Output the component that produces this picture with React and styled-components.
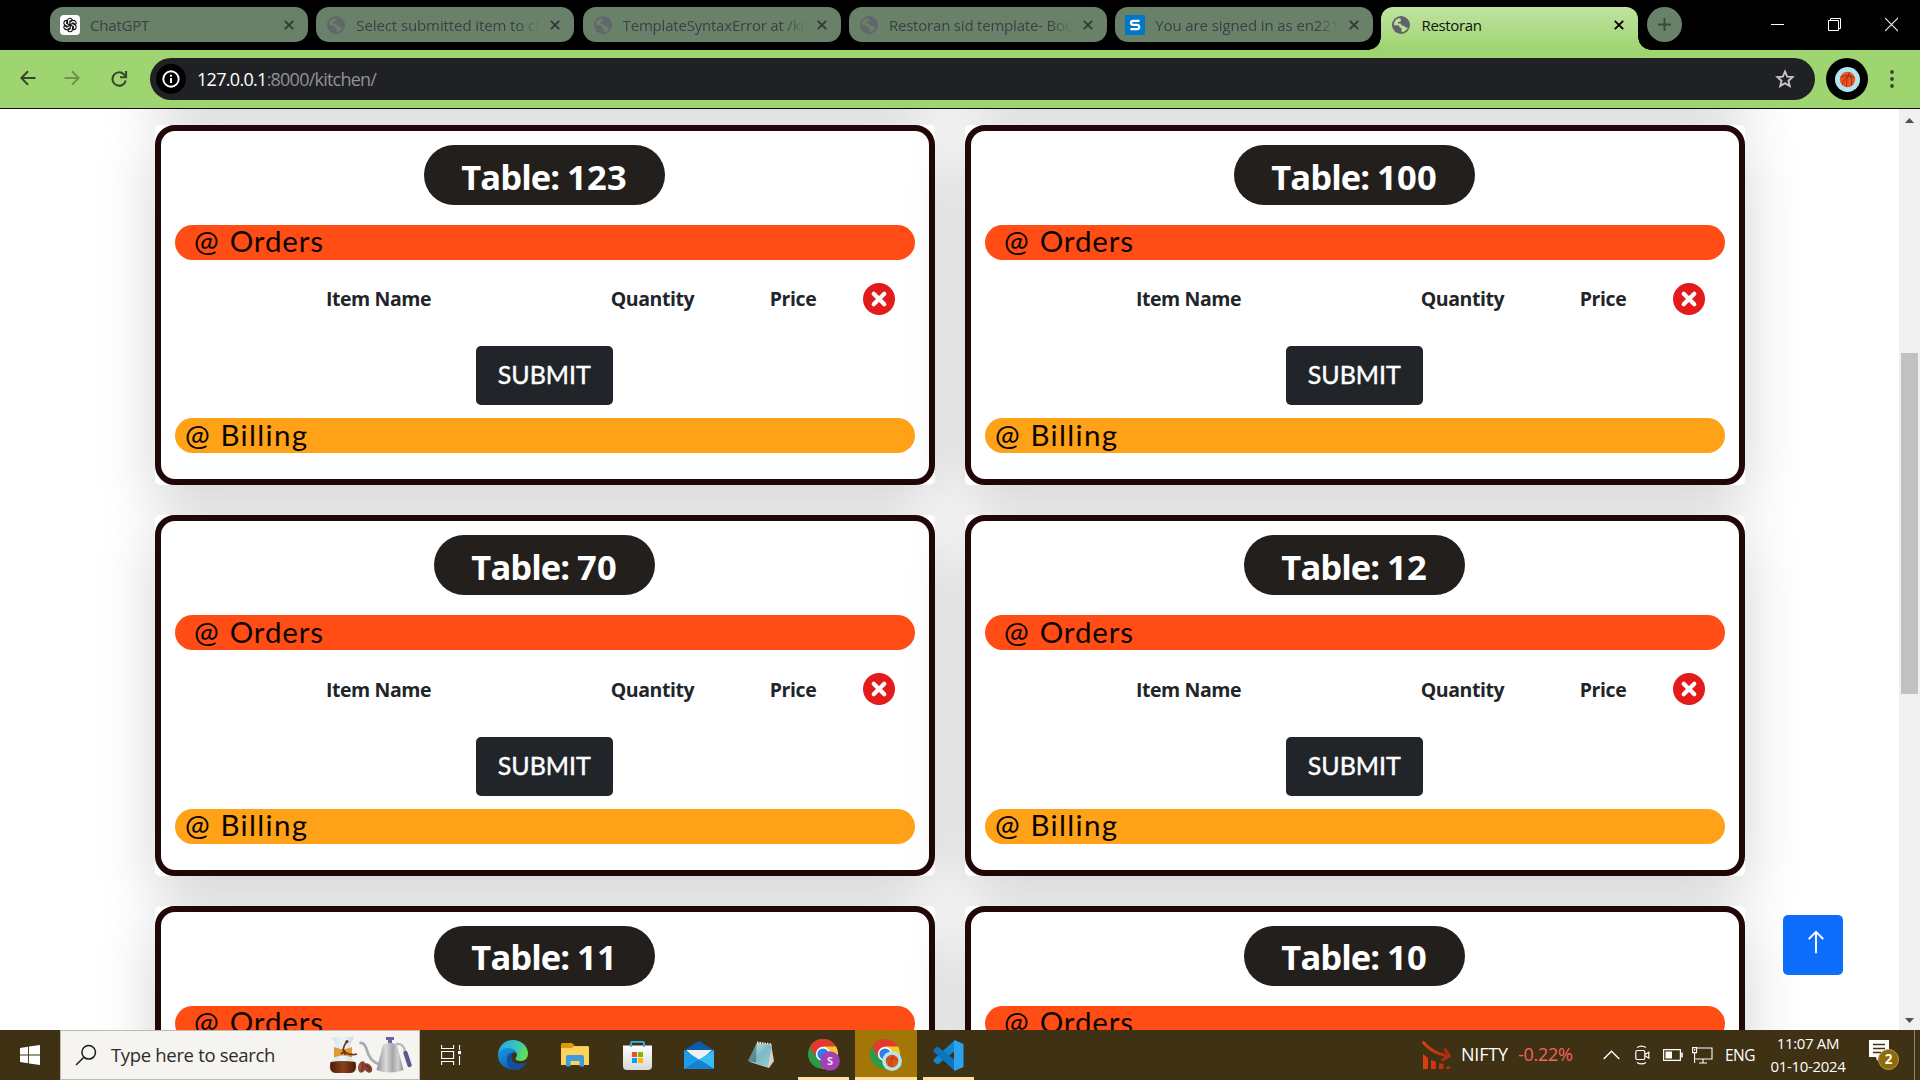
import React from "react";
import styled, { createGlobalStyle } from "styled-components";

const segoe = '"Open Sans", "Noto Sans", sans-serif';
const nunito = '"Lato", "Open Sans", sans-serif';

const GlobalStyle = createGlobalStyle`
  * { box-sizing: border-box; }
  body { margin: 0; background: #fff; overflow: hidden; font-family: ${segoe}; }
  svg { display: block; flex: none; }
`;

const Screen = styled.div`
  width: 1920px;
  height: 1080px;
  display: flex;
  flex-direction: column;
  overflow: hidden;
`;

const Label = styled.span`
  font-family: ${(p) => p.$font || segoe};
  font-size: ${(p) => p.$size}px;
  font-weight: ${(p) => p.$weight || 400};
  letter-spacing: ${(p) => p.$spacing || 0}px;
  word-spacing: ${(p) => p.$words || 0}px;
  line-height: ${(p) => p.$line || 1.3};
  color: ${(p) => p.$color || "#fff"};
  -webkit-text-stroke: ${(p) => p.$stroke || 0}px currentColor;
  white-space: pre;
`;

/* ---------- browser chrome ---------- */

const TabStrip = styled.div`
  height: 50px;
  flex: none;
  background: #000;
  display: flex;
  padding: 7px 0 0 50px;
  gap: 8.3px;
`;

const Tab = styled.div`
  width: 258px;
  height: 35px;
  flex: none;
  border-radius: 13px;
  background: #6a8169;
  display: flex;
  align-items: center;
  padding: 0 14px 0 10px;
`;

const ActiveTab = styled(Tab)`
  position: relative;
  width: 257px;
  height: 43px;
  padding-bottom: 8px;
  border-radius: 12px 12px 0 0;
  background: linear-gradient(#c0e3a0, #9fd571);
  &::before,
  &::after {
    content: "";
    position: absolute;
    bottom: 0;
    width: 13px;
    height: 13px;
  }
  &::before {
    left: -13px;
    background: radial-gradient(circle at 0 0, transparent 12.5px, #9fd571 13px);
  }
  &::after {
    right: -13px;
    background: radial-gradient(circle at 100% 0, transparent 12.5px, #9fd571 13px);
  }
`;

const Favicon = styled.div`
  width: 20px;
  height: 20px;
  flex: none;
  display: flex;
  align-items: center;
  justify-content: center;
  border-radius: ${(p) => p.$radius || 0}px;
  background: ${(p) => p.$bg || "transparent"};
  margin-right: 10px;
`;

const TabTitle = styled.div`
  flex: 1;
  min-width: 0;
  overflow: hidden;
  display: flex;
  mask-image: ${(p) => (p.$fade ? "linear-gradient(90deg, #000 87%, transparent 99%)" : "none")};
  margin-right: 8px;
  padding-top: 2px;
`;

const NewTab = styled.div`
  width: 35px;
  height: 35px;
  border-radius: 50%;
  background: #6a8169;
  display: flex;
  align-items: center;
  justify-content: center;
`;

const WindowControls = styled.div`
  display: flex;
  gap: 44px;
  margin: 10px 22px 0 auto;
`;

const Toolbar = styled.div`
  height: 59px;
  flex: none;
  background: #9fd571;
  border-bottom: 1px solid #111;
  display: flex;
  align-items: center;
  padding: 0 26px 0 18px;
`;

const NavIcons = styled.div`
  display: flex;
  gap: 27.5px;
  width: 132px;
`;

const Omnibox = styled.div`
  width: 1665px;
  height: 42px;
  border-radius: 21px;
  background: #202124;
  display: flex;
  align-items: center;
  padding: 0 20px 0 6px;
`;

const InfoBadge = styled.div`
  width: 30px;
  height: 30px;
  border-radius: 50%;
  background: #000;
  display: flex;
  align-items: center;
  justify-content: center;
  margin-right: 11px;
`;

const Url = styled.div`
  flex: 1;
  display: flex;
  padding-top: 2px;
`;

const Avatar = styled.div`
  width: 42px;
  height: 42px;
  margin-left: 11px;
  border-radius: 50%;
  background: #000;
  display: flex;
  align-items: center;
  justify-content: center;
`;

const Spacer = styled.div`
  flex: 1;
`;

/* ---------- page ---------- */

const PageRow = styled.div`
  height: 921px;
  flex: none;
  display: flex;
`;

const Viewport = styled.main`
  position: relative;
  width: 1899px;
  height: 921px;
  overflow: hidden;
  background: #fff;
`;

const TableGrid = styled.section`
  display: grid;
  grid-template-columns: 780px 780px;
  gap: 30px;
  margin: -374.4px 0 0 155px;
`;

const CardShell = styled.article`
  height: 360.4px;
  border-radius: 5px;
  background: #fff;
  box-shadow: 0 20px 60px rgba(0, 0, 0, 0.175);
`;

const CardBody = styled.div`
  height: 100%;
  border: 6px solid #210708;
  border-radius: 20px;
  padding: 14px;
  display: flex;
  flex-direction: column;
  align-items: center;
`;

const TablePill = styled.h2`
  margin: 0 1.500px 20px 0;
  height: 60px;
  width: ${(p) => p.$width}px;
  border-radius: 30px;
  background: #231f1c;
  display: flex;
  align-items: center;
  justify-content: center;
  gap: 8px;
  padding-top: 4px;
`;

const SectionBar = styled.div`
  align-self: stretch;
  height: 35px;
  border-radius: 17.5px;
  background: ${(p) => p.$bg};
  padding: 0 0 2px ${(p) => p.$indent}px;
  display: flex;
  align-items: center;
`;

const HeaderRow = styled.div`
  align-self: stretch;
  height: 78.2px;
  display: grid;
  grid-template-columns: 407px 141px 140px 32px;
  align-items: center;
  justify-items: center;
`;

const Submit = styled.button`
  width: 137px;
  height: 59px;
  margin: 8px 1.500px 13px 0;
  border: 0;
  padding: 0 0 2px;
  border-radius: 5px;
  background: #212529;
  display: flex;
  align-items: center;
  justify-content: center;
`;

const BackToTop = styled.button`
  position: absolute;
  right: 56px;
  bottom: 55px;
  width: 60px;
  height: 60px;
  border: 0;
  border-radius: 5px;
  background: #0d6efd;
  display: flex;
  align-items: center;
  justify-content: center;
  padding: 0 0 6px 6px;
`;

const Scrollbar = styled.div`
  width: 21px;
  background: #f0f0f0;
  display: flex;
  flex-direction: column;
  align-items: center;
  padding: 9px 0 7px;
`;

const Thumb = styled.div`
  width: 17px;
  height: 341px;
  margin-top: 230px;
  background: #c1c1c1;
`;

/* ---------- taskbar ---------- */

const Taskbar = styled.footer`
  height: 50px;
  flex: none;
  display: flex;
  background: #3f3113;
`;

const StartButton = styled.div`
  width: 60px;
  display: flex;
  align-items: center;
  justify-content: center;
`;

const SearchBox = styled.div`
  width: 360px;
  background: #f6f4f1;
  border: 1px solid #bdbab4;
  display: flex;
  align-items: center;
  gap: 14px;
  padding: 0 7px 0 14px;
`;

const AppSlot = styled.div`
  width: ${(p) => p.$width || 62}px;
  height: 50px;
  display: flex;
  align-items: center;
  justify-content: center;
  background: ${(p) => (p.$active ? "#a27708" : "transparent")};
  box-shadow: ${(p) => (p.$active ? "inset 0 -3px 0 #fde0a4" : "none")};
`;

const RunningApp = styled(AppSlot)`
  width: 51px;
  margin: 0 5.5px 0 6px;
  box-shadow: inset 0 -3px 0 #fde0a4;
`;

const Tray = styled.div`
  margin-left: auto;
  display: flex;
  align-items: center;
  padding-right: 5px;
`;

const TraySlot = styled.div`
  width: ${(p) => p.$width}px;
  display: flex;
`;

const Clock = styled.div`
  width: 92px;
  display: flex;
  flex-direction: column;
  align-items: center;
  margin-right: 15px;
`;

const Divider = styled.div`
  width: 1px;
  height: 50px;
  background: #8b8473;
`;

/* ---------- icons ---------- */

const Globe = () => (
  <svg width="18" height="18" viewBox="0 0 18 18">
    <circle cx="9" cy="9" r="9" fill="#5f6368" />
    <path d="M8.200 2C4.300 2.200 1.800 5.500 2 9.300c1.600.2 3.400-.3 4.800.5.9.6.6 1.500 1.500 1.900 1 .4 1.200.6 1.200 1.700l.1 2.500c3 0 5.300-2 6.200-4.500-.9.400-2.300.3-2.900-.7-.7-1-1.900-.8-2.900-1.100-.9-.4-.6-1.800-1.800-2-1-.1-2 .2-2.300-.6-.2-.9.700-1.300 1.700-1.300.900 0 1.400-.4 1.300-1.200 0-.8-.4-1.500-.7-2.500z" fill="currentColor" />
  </svg>
);

const GlobeTint = styled.div`
  display: flex;
  opacity: ${(p) => (p.$dim ? 0.85 : 1)};
  color: ${(p) => (p.$dim ? "#6a8169" : "#b9df98")};
`;

const OpenAi = () => (
  <svg width="16" height="16" viewBox="0 0 16 16" fill="none" stroke="#111" strokeWidth="1.1">
    {[0, 60, 120, 180, 240, 300].map((a) => (
      <path key={a} d="M5.500 6.500V3.600a2.500 2.500 0 0 1 4.800-.8L7.800 4.300v4" transform={`rotate(${a} 8 8)`} />
    ))}
  </svg>
);

const SIcon = () => (
  <svg width="20" height="20" viewBox="0 0 20 20">
    <rect width="20" height="20" fill="#0078c8" />
    <path d="M14.600 5.800H8.200Q6 5.800 6 7.800T8.200 9.900h3.600q2.400 0 2.400 2.200T11.800 14.200H5.400" fill="none" stroke="#fff" strokeWidth="2.300" />
  </svg>
);

const Cross = ({ color }) => (
  <svg width="10" height="10" viewBox="0 0 10 10" stroke={color} strokeWidth="1.800">
    <path d="M.8.8l8.400 8.400M9.200.8L.8 9.200" />
  </svg>
);

const Plus = () => (
  <svg width="13" height="13" viewBox="0 0 13 13" stroke="#3b4a3a" strokeWidth="1.900">
    <path d="M6.500 0v13M0 6.500h13" />
  </svg>
);

const Back = ({ flip, color }) => (
  <svg width="18" height="18" viewBox="0 0 18 18" fill="none" stroke={color} strokeWidth="2" transform={flip ? "scale(-1 1)" : undefined}>
    <path d="M17.500 9H4M10 2.300L3.400 9l6.600 6.700" />
  </svg>
);

const Reload = () => (
  <svg width="20" height="20" viewBox="0 0 20 20" fill="none" stroke="#37452c" strokeWidth="2">
    <path d="M16.700 11.500A6.700 6.700 0 1 1 14.800 5.200L17 7.400" />
    <path d="M17.100 2v6.200H11" />
  </svg>
);

const Info = () => (
  <svg width="18" height="18" viewBox="0 0 18 18" fill="none" stroke="#fff" strokeWidth="1.900">
    <circle cx="9" cy="9" r="7.700" />
    <path d="M9 8v5M9 4.800v1.900" />
  </svg>
);

const Star = () => (
  <svg width="20" height="20" viewBox="0 0 20 20" fill="none" stroke="#c6c7c9" strokeWidth="1.900">
    <path d="M10 2.600l2.200 5 5.400.5-4.100 3.600 1.200 5.300L10 14.200 5.300 17l1.200-5.300-4.100-3.600 5.400-.5z" />
  </svg>
);

const Basketball = ({ size }) => (
  <svg width={size} height={size} viewBox="0 0 25 25">
    <circle cx="12.500" cy="12.500" r="12.500" fill="#b1e6f0" />
    <circle cx="12.500" cy="12.500" r="7.700" fill="#f4511e" />
    <g fill="none" stroke="#6b3020" strokeWidth=".8">
      <path d="M14.500 5.200Q10.500 12 11.500 20M5.300 10.500Q12 6.500 19.800 11M15 8.500Q17.500 13 16.500 18.500M7.500 18Q7.500 12 14.500 8.500" />
    </g>
  </svg>
);

const MoreDots = () => (
  <svg width="4" height="20" viewBox="0 0 4 20" fill="#37452c">
    <circle cx="2" cy="3" r="1.900" />
    <circle cx="2" cy="10" r="1.900" />
    <circle cx="2" cy="17" r="1.900" />
  </svg>
);

const WinButtons = () => (
  <WindowControls>
    <svg width="13" height="15" viewBox="0 0 13 15" stroke="#fff"><path d="M0 7.500h13" /></svg>
    <svg width="13" height="15" viewBox="0 0 13 15" fill="none" stroke="#fff">
      <path d="M.5 3.500h10v10H.5zM2.500 3V1.500h10v10H11" />
    </svg>
    <svg width="13" height="15" viewBox="0 0 13 15" stroke="#e8e8e8" strokeWidth="1.100"><path d="M0 1l13 13M13 1L0 14" /></svg>
  </WindowControls>
);

const RemoveIcon = () => (
  <svg width="32" height="32" viewBox="0 0 32 32">
    <circle cx="16" cy="16" r="16" fill="#e31b1b" />
    <path d="M10.700 10.700l10.600 10.600M21.300 10.700L10.700 21.300" stroke="#fff" strokeWidth="4.200" strokeLinecap="round" />
  </svg>
);

const UpArrow = () => (
  <svg width="16" height="24" viewBox="0 0 16 24" fill="none" stroke="#fff" strokeWidth="1.900" strokeLinecap="round" strokeLinejoin="round">
    <path d="M8 22.500V1.800M1.300 8.500L8 1.800l6.700 6.700" />
  </svg>
);

const Triangle = ({ down }) => (
  <svg width="9" height="5" viewBox="0 0 9 5" fill="#505050">
    <path d={down ? "M0 0h9L4.500 5z" : "M0 5h9L4.500 0z"} />
  </svg>
);

const Windows = () => (
  <svg width="20" height="20" viewBox="0 0 20 20" fill="#fff">
    <path d="M0 2.900L8.100 1.700v7.800H0zM9 1.600L20 0v9.500H9zM0 10.400h8.100v7.900L0 17.100zM9 10.400h11V20L9 18.400z" />
  </svg>
);

const Magnifier = () => (
  <svg width="22" height="22" viewBox="0 0 22 22" fill="none" stroke="#1b1b1b" strokeWidth="1.500">
    <circle cx="13.700" cy="8.300" r="6.800" />
    <path d="M8.900 13.300L1 21" />
  </svg>
);

const CoffeeArt = () => (
  <svg width="83" height="38" viewBox="0 0 83 38">
    <defs>
      <linearGradient id="steel">
        <stop offset="0" stopColor="#8d8f90" /><stop offset=".35" stopColor="#d9dadb" /><stop offset=".6" stopColor="#a4a6a7" /><stop offset=".8" stopColor="#d0d1d2" /><stop offset="1" stopColor="#87898a" />
      </linearGradient>
      <linearGradient id="glass"><stop offset="0" stopColor="#c8dfea" /><stop offset=".5" stopColor="#eef5f8" /><stop offset="1" stopColor="#bdd6e3" /></linearGradient>
      <linearGradient id="brew"><stop offset="0" stopColor="#4d1c08" /><stop offset=".5" stopColor="#8a4119" /><stop offset="1" stopColor="#4d1c08" /></linearGradient>
    </defs>
    <path d="M3 1h22l-6 13v5l8 9q2 9-5 9H6q-7 0-5-9l8-9v-5z" fill="url(#glass)" />
    <path d="M1.500 26q12-2 25 0 2 11-5 11H6.500q-7 0-5-11z" fill="url(#brew)" />
    <path d="M5 11l6.500 2h5L23 11v10.500l-6.500-2h-5l-6.500 2z" fill="#dd9a35" />
    <path d="M18 5q-3 4-4 9M12 18l4-3m-1 1q7 4 13 2M13.500 14q4 1 2 5" stroke="#6f3219" strokeWidth="1.700" fill="none" />
    <circle cx="18" cy="5.500" r="1.500" fill="#6f3219" />
    <ellipse cx="33" cy="31" rx="4" ry="5.800" fill="#96513e" transform="rotate(12 33 31)" />
    <ellipse cx="39" cy="32" rx="3.600" ry="5.300" fill="#84402f" transform="rotate(-35 39 32)" />
    <path d="M33 26q2 4-.5 10M36 29q4 1 5 5" stroke="#4b2018" fill="none" strokeWidth=".8" />
    <path d="M30.500 7q5-.5 7 6 3 12 12 15" stroke="#a8aaac" strokeWidth="2.800" fill="none" />
    <path d="M54 9q7-5 14 0l6.500 25q-13.500 5-27 0z" fill="url(#steel)" />
    <path d="M57 1h8v3h-2v3h-4V4h-2z" fill="#6a61a0" />
    <path d="M67 8q8-1 9 8" stroke="#b4b6b8" strokeWidth="2.300" fill="none" />
    <path d="M76.500 17l4 12" stroke="#5e5595" strokeWidth="4.300" strokeLinecap="round" />
  </svg>
);

const TaskView = () => (
  <svg width="21" height="20" viewBox="0 0 21 20" fill="none" stroke="#fff" strokeWidth="1.100">
    <path d="M.6 0v3.500h12V0M.6 20v-3.500h12V20M.6 6.500h12v7H.6zM18.500 0v5M18.500 11v9" />
    <path d="M17 6h3v3.200h-3z" fill="#fff" stroke="none" />
  </svg>
);

const Edge = () => (
  <svg width="30" height="30" viewBox="0 0 30 30">
    <defs>
      <linearGradient id="edgeTop" x1="0" y1=".3" x2="1" y2=".6"><stop offset="0" stopColor="#2aa9e6" /><stop offset=".55" stopColor="#34c6c0" /><stop offset="1" stopColor="#66e04c" /></linearGradient>
      <linearGradient id="edgeLow" x1="0" y1="0" x2=".6" y2="1"><stop offset="0" stopColor="#1b9de2" /><stop offset="1" stopColor="#0c5cb8" /></linearGradient>
    </defs>
    <path d="M0 14C1 5 7.500 0 15 0c9 0 15 6.500 15 13.500 0 5-3.500 7.500-7.500 7.500-3.500 0-5-1.300-5-2.300s1.500-1.500 1.500-4.200c0-3-3.500-5.500-8-5.500C6 9 2 11 0 14z" fill="url(#edgeTop)" />
    <path d="M0 15c0-4 4-7 9.500-7 5.500 0 9.500 3 9.500 6.500-.5-1.500-3-2.500-5-1.500-4 2-3 8 1 12 2 2 4 3 6 3.500C13 32 0 27 0 15z" fill="url(#edgeLow)" />
    <path d="M10.500 14.500C7 18 9 29.500 17 29.900c5 0 9-3 11-6.700.3-.6-.2-1-.8-.7-5 2.500-12 1.500-13.500-4-.5-2 0-4 1.300-5.500-1.500-.2-3.300.4-4.500 1.500z" fill="#12509c" />
  </svg>
);

const Folder = () => (
  <svg width="28" height="24" viewBox="0 0 28 24">
    <path d="M0 2q0-2 1.500-2H11l3 3h13v5H0z" fill="#dd9a04" />
    <path d="M0 5h10.500l3-1.800H27q1 0 1 1V22H0z" fill="#ffd25c" />
    <path d="M5 23.500V14q0-2 2-2h14q2 0 2 2v9.500h-4.500V18h-9v5.500z" fill="#3d9be0" />
  </svg>
);

const Store = () => (
  <svg width="29" height="29" viewBox="0 0 29 29">
    <defs><linearGradient id="bag" x2="0" y2="1"><stop offset="0" stopColor="#fff" /><stop offset="1" stopColor="#d8d8d8" /></linearGradient></defs>
    <path d="M0 4.500h29V25q0 4-4 4H4q-4 0-4-4z" fill="url(#bag)" />
    <path d="M8 6V2q0-1.200 1.500-1.200h10Q21 .8 21 2v4" fill="none" stroke="#35b4ea" strokeWidth="1.800" />
    <path d="M9 11h5v5H9z" fill="#f25022" /><path d="M15 11h5v5h-5z" fill="#7fba00" />
    <path d="M9 17h5v5H9z" fill="#00a4ef" /><path d="M15 17h5v5h-5z" fill="#ffb900" />
  </svg>
);

const Mail = () => (
  <svg width="30" height="28" viewBox="0 0 30 28">
    <path d="M0 9L15 0l15 9v8H0z" fill="#0a5cab" />
    <path d="M2 9h26l-13 12z" fill="#f1f1f1" />
    <path d="M0 9l30 19H0z" fill="#1e9ce8" />
    <path d="M30 9v19L15 18.500z" fill="#35bdf4" />
    <path d="M0 28l15-9.500L30 28z" fill="#1780d4" />
  </svg>
);

const Notepad = () => (
  <svg width="28" height="28" viewBox="0 0 28 28">
    <defs><linearGradient id="pad" x2="1" y2="1"><stop offset="0" stopColor="#d6ecef" /><stop offset=".5" stopColor="#7cb9c4" /><stop offset="1" stopColor="#9fced6" /></linearGradient></defs>
    <path d="M24 3l3 17-5 7-19-6z" fill="#d7d2c3" />
    <path d="M10 2l15 2-4 22L1 20z" fill="url(#pad)" />
    <path d="M9.500 4l-5.500 8-3 8 8 1.500z" fill="#32606a" opacity=".55" />
    <path d="M10 1.500l15 2" stroke="#eee" strokeWidth="2" strokeDasharray="1.500 1" />
  </svg>
);

const Chrome = ({ children }) => (
  <svg width="32" height="32" viewBox="0 0 32 32">
    <circle cx="15" cy="15" r="15" fill="#2c9b47" />
    <path d="M2 7.500A15 15 0 0 1 28 7.500L15 15H8.500z" fill="#e23b2e" />
    <path d="M15 7.500h13A15 15 0 0 1 15 30l6.500-11z" fill="#fcc934" />
    <path d="M2 7.500L8.500 18.700 15 7.500z" fill="#e23b2e" />
    <circle cx="15" cy="15" r="7.200" fill="#fff" />
    <circle cx="15" cy="15" r="5.600" fill="#2f7de9" />
    {children}
  </svg>
);

const ProfileText = styled.text`
  font: 700 11px ${segoe};
  fill: #f3dcf8;
  text-anchor: middle;
`;

const Code = () => (
  <svg width="31" height="31" viewBox="0 0 31 31">
    <path d="M22 0L1.500 18.500q-2 2 0 3.500l2 1.800q1.200.8 2.500-.3L23 10z" fill="#1486cf" />
    <path d="M22 31L1.500 12.500q-2-2 0-3.500l2-1.800q1.200-.8 2.500.3L23 21z" fill="#0b76bb" />
    <path d="M22 .2L30.500 4v23L22 30.800q-1 0-1-1.500V1.500Q21 .2 22 .2z" fill="#2ba3ef" />
  </svg>
);

const Falling = () => (
  <svg width="29" height="28" viewBox="0 0 29 28">
    <defs><linearGradient id="fall" gradientUnits="userSpaceOnUse" x1="0" x2="29" y1="0" y2="0"><stop offset="0" stopColor="#de4012" /><stop offset="1" stopColor="#a92b12" /></linearGradient></defs>
    <path d="M1.500 1.500Q10 12 24 14.500" stroke="url(#fall)" strokeWidth="2.800" fill="none" strokeLinecap="round" />
    <path d="M22.500 7.500l5 7.500-8 4.500" stroke="#b32d11" strokeWidth="2.800" fill="none" />
    <path d="M1 13l5 4v11H1zM9 19l5 1.500V28H9zM17 22l4.500 1v5H17zM24 26l4-1v3h-4z" fill="url(#fall)" />
  </svg>
);

const Chevron = () => (
  <svg width="17" height="10" viewBox="0 0 17 10" fill="none" stroke="#fff" strokeWidth="1.400"><path d="M.7 9L8.500 1.200 16.300 9" /></svg>
);

const MeetNow = () => (
  <svg width="15" height="20" viewBox="0 0 15 20" fill="none" stroke="#fff" strokeWidth="1.200">
    <rect x=".8" y="5.500" width="9" height="9" rx="1.500" />
    <path d="M10 9.500l3.800-2.300v6L10 10.800M2 2.500Q6.500-.3 11 2.500M2 17.500q4.500 2.800 9 0" />
  </svg>
);

const Battery = () => (
  <svg width="20" height="12" viewBox="0 0 20 12" fill="none" stroke="#fff" strokeWidth="1.200">
    <path d="M.6.6h16.800v10.800H.6z" /><path d="M2.500 2.500h6.500v7H2.500z" fill="#fff" stroke="none" /><path d="M19 3.500v5" strokeWidth="1.600" />
  </svg>
);

const Network = () => (
  <svg width="21" height="17" viewBox="0 0 21 17" fill="none" stroke="#fff" strokeWidth="1.100">
    <path d="M5 1h15v11H3.500M11 12v4M7 16h8M.6.600h4v5h-4zM2.600 5.600V16" />
    <path d="M2 2h1.300v1.600H2z" fill="#fff" stroke="none" />
  </svg>
);

const BadgeText = styled.text`
  font: 700 13.5px ${segoe};
  fill: #fff;
  text-anchor: middle;
`;

const Notification = () => (
  <svg width="31" height="32" viewBox="0 0 31 32">
    <path d="M0 1h20v17h-9l-3 4-1-4H0z" fill="#fff" />
    <path d="M4 5.500h12M4 9.500h12M4 13.500h8" stroke="#3f3113" strokeWidth="1.300" />
    <circle cx="19.500" cy="20.500" r="10" fill="#8f6b06" stroke="#b39b5b" />
    <BadgeText x="19.500" y="25.300">2</BadgeText>
  </svg>
);

/* ---------- data ---------- */

const tabs = [
  { title: "ChatGPT", icon: "ai", spacing: -0.2 },
  { title: "Select submitted item to change", icon: "globe", spacing: -0.1 },
  { title: "TemplateSyntaxError at /kitchen/", icon: "globe", spacing: -0.2 },
  { title: "Restoran sid template- Bootstrap", icon: "globe", spacing: -0.2 },
  { title: "You are signed in as en221035", icon: "s", spacing: -0.1 },
];

const tables = ["101", "102", "123", "100", "70", "12", "11", "10"];

const TabIcon = ({ kind }) => {
  if (kind === "ai") return <Favicon $bg="#fff" $radius={4}><OpenAi /></Favicon>;
  if (kind === "s") return <Favicon><SIcon /></Favicon>;
  return <Favicon><GlobeTint $dim><Globe /></GlobeTint></Favicon>;
};

const ColumnHead = ({ children }) => (
  <Label $size={19.5} $weight={700} $color="#212529" $spacing={-0.42}>{children}</Label>
);

const TableCard = ({ number }) => (
  <CardShell>
    <CardBody>
      <TablePill $width={number.length === 3 ? 241 : 221}>
        <Label $size={34.5} $weight={700} $spacing={-0.95}>Table:</Label>
        <Label $size={34.5} $weight={700} $spacing={0.3}>{number}</Label>
      </TablePill>
      <SectionBar $bg="#ff4d15" $indent={19}>
        <Label $font={nunito} $size={29.5} $color="#0b0502" $spacing={0.9} $words={1.6}>@ Orders</Label>
      </SectionBar>
      <HeaderRow>
        <ColumnHead>Item Name</ColumnHead>
        <ColumnHead>Quantity</ColumnHead>
        <ColumnHead>Price</ColumnHead>
        <RemoveIcon />
      </HeaderRow>
      <Submit>
        <Label $font={nunito} $size={25} $stroke={0.4}>SUBMIT</Label>
      </Submit>
      <SectionBar $bg="#ffa218" $indent={10}>
        <Label $font={nunito} $size={29.5} $color="#0b0502" $spacing={1.35} $words={0.5}>@ Billing</Label>
      </SectionBar>
    </CardBody>
  </CardShell>
);

export default function App() {
  return (
    <Screen>
      <GlobalStyle />
      <TabStrip>
        {tabs.map((t) => (
          <Tab key={t.title}>
            <TabIcon kind={t.icon} />
            <TabTitle $fade={t.title.length > 10}>
              <Label $size={15} $color="#3c4043" $spacing={t.spacing}>{t.title}</Label>
            </TabTitle>
            <Cross color="#33373a" />
          </Tab>
        ))}
        <ActiveTab>
          <Favicon><GlobeTint><Globe /></GlobeTint></Favicon>
          <TabTitle>
            <Label $size={15} $color="#111" $spacing={-0.35}>Restoran</Label>
          </TabTitle>
          <Cross color="#000" />
        </ActiveTab>
        <NewTab><Plus /></NewTab>
        <WinButtons />
      </TabStrip>
      <Toolbar>
        <NavIcons>
          <Back color="#37452c" />
          <Back color="#6f9354" flip />
          <Reload />
        </NavIcons>
        <Omnibox>
          <InfoBadge><Info /></InfoBadge>
          <Url>
            <Label $size={18} $spacing={-0.7}>127.0.0.1</Label>
            <Label $size={18} $spacing={-0.78} $color="#909194">:8000/kitchen/</Label>
          </Url>
          <Star />
        </Omnibox>
        <Avatar><Basketball size={25} /></Avatar>
        <Spacer />
        <MoreDots />
      </Toolbar>
      <PageRow>
        <Viewport>
          <TableGrid>
            {tables.map((n) => <TableCard key={n} number={n} />)}
          </TableGrid>
          <BackToTop><UpArrow /></BackToTop>
        </Viewport>
        <Scrollbar>
          <Triangle />
          <Thumb />
          <Spacer />
          <Triangle down />
        </Scrollbar>
      </PageRow>
      <Taskbar>
        <StartButton><Windows /></StartButton>
        <SearchBox>
          <Magnifier />
          <Label $size={18.5} $color="#2b2b2b" $spacing={-0.33}>Type here to search</Label>
          <Spacer />
          <CoffeeArt />
        </SearchBox>
        <AppSlot $width={62}><TaskView /></AppSlot>
        <AppSlot><Edge /></AppSlot>
        <AppSlot><Folder /></AppSlot>
        <AppSlot><Store /></AppSlot>
        <AppSlot><Mail /></AppSlot>
        <AppSlot><Notepad /></AppSlot>
        <RunningApp>
          <Chrome>
            <circle cx="22" cy="22" r="9.800" fill="#a53fb5" />
            <ProfileText x="22" y="26">S</ProfileText>
          </Chrome>
        </RunningApp>
        <AppSlot $active>
          <Chrome>
            <g transform="translate(12.200 12.200) scale(.79)">
              <circle cx="12.500" cy="12.500" r="12.500" fill="#b1e6f0" />
              <circle cx="12.500" cy="12.500" r="8" fill="#e5531b" />
              <path d="M14.500 5.200Q10.500 12 11.500 20M5.300 10.500Q12 6.500 19.800 11M7.500 18Q7.500 12 14.500 8.500" fill="none" stroke="#a03e18" />
            </g>
          </Chrome>
        </AppSlot>
        <RunningApp><Code /></RunningApp>
        <Tray>
          <TraySlot $width={39}><Falling /></TraySlot>
          <TraySlot $width={57}><Label $size={18} $spacing={-0.2}>NIFTY</Label></TraySlot>
          <TraySlot $width={85}><Label $size={18} $color="#f2655f" $spacing={-0.3}>-0.22%</Label></TraySlot>
          <TraySlot $width={32}><Chevron /></TraySlot>
          <TraySlot $width={28}><MeetNow /></TraySlot>
          <TraySlot $width={29}><Battery /></TraySlot>
          <TraySlot $width={33}><Network /></TraySlot>
          <TraySlot $width={37}><Label $size={15.5} $spacing={-0.5}>ENG</Label></TraySlot>
          <Clock>
            <Label $size={15} $line={1.53} $spacing={-0.35}>11:07 AM</Label>
            <Label $size={15} $line={1.53} $spacing={-0.35}>01-10-2024</Label>
          </Clock>
          <TraySlot $width={45}><Notification /></TraySlot>
          <Divider />
        </Tray>
      </Taskbar>
    </Screen>
  );
}
